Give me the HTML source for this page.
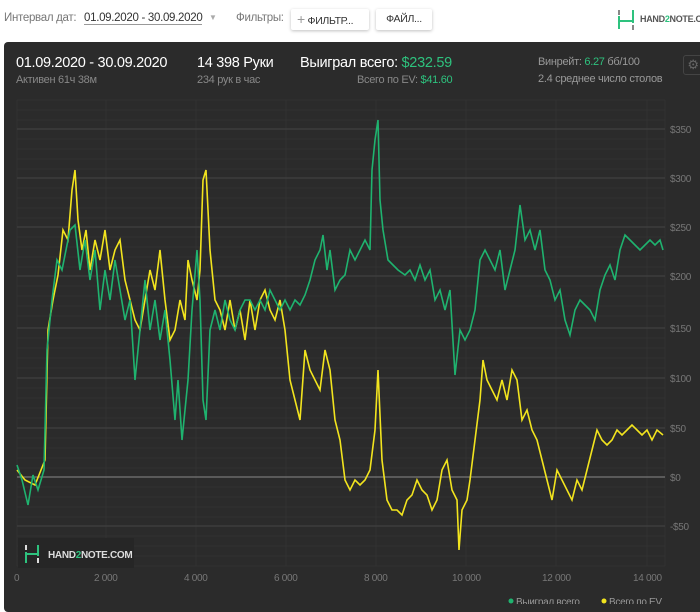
<!DOCTYPE html>
<html><head><meta charset="utf-8"><style>
*{margin:0;padding:0;box-sizing:border-box}
body{width:700px;height:604px;background:#fff;font-family:"Liberation Sans",sans-serif;position:relative;overflow:hidden;letter-spacing:-0.3px}
.t{position:absolute;white-space:nowrap}
.btn{position:absolute;top:9px;height:21px;background:#fff;box-shadow:0 1px 3px rgba(0,0,0,.25);border-radius:2px;font-size:10.5px;color:#333;line-height:21px;padding:0 6px;white-space:nowrap;overflow:hidden}
.panel{position:absolute;left:4px;top:42px;width:700px;height:570px;background:#2b2b2b;border-radius:4px}
</style></head><body>
<div class="t" style="left:4px;top:12px;font-size:11.5px;color:#777">Интервал дат:</div>
<div class="t" style="left:84px;top:12px;font-size:11.5px;color:#333;border-bottom:1px solid #999">01.09.2020 - 30.09.2020</div>
<div class="t" style="left:209px;top:13px;font-size:8px;color:#aaa">▼</div>
<div class="t" style="left:236px;top:12px;font-size:11.5px;color:#777">Фильтры:</div>
<div class="btn" style="left:291px;width:78px"><span style="color:#999;font-size:14px">+</span> ФИЛЬТР...</div>
<div class="btn" style="left:376px;width:56px;text-align:center">ФАЙЛ...</div>
<svg style="position:absolute;left:617px;top:10px" width="18" height="20"><path d="M2 6v13M16 0v13M2 11 L16 11" stroke="#2ec27e" stroke-width="2" fill="none"/><path d="M2 0v5M16 15v5" stroke="#888" stroke-width="2"/></svg>
<div class="t" style="left:640px;top:14px;font-size:9px;font-weight:bold;color:#555">HAND<span style="color:#2ec27e">2</span>NOTE.COM</div>
<div class="panel"></div>
<div class="t" style="left:16px;top:55px;font-size:14.5px;color:#fff">01.09.2020 - 30.09.2020</div>
<div class="t" style="left:16px;top:74px;font-size:11px;color:#888">Активен 61ч 38м</div>
<div class="t" style="left:197px;top:55px;font-size:14.5px;color:#fff">14 398 Руки</div>
<div class="t" style="left:197px;top:74px;font-size:11px;color:#888">234 рук в час</div>
<div class="t" style="left:300px;top:55px;font-size:14.5px;color:#fff">Выиграл всего: <span style="color:#2ec27e">$232.59</span></div>
<div class="t" style="left:357px;top:74px;font-size:11px;color:#888">Всего по EV: <span style="color:#2ec27e">$41.60</span></div>
<div class="t" style="left:538px;top:56px;font-size:11px;color:#999">Винрейт: <span style="color:#2ec27e">6.27</span> бб/100</div>
<div class="t" style="left:538px;top:73px;font-size:11px;color:#999">2.4 среднее число столов</div>
<div style="position:absolute;left:683px;top:55px;width:20px;height:20px;border:1px solid #444;border-radius:3px;color:#666;font-size:13px;line-height:18px;text-align:center">⚙</div>
<svg style="position:absolute;left:0;top:0" width="700" height="604">
<g stroke="#313131" stroke-width="1">
<path d="M17 100H665M17 110H665M17 120H665M17 139H665M17 149H665M17 159H665M17 169H665M17 188H665M17 198H665M17 208H665M17 218H665M17 237H665M17 247H665M17 257H665M17 267H665M17 286H665M17 296H665M17 306H665M17 316H665M17 338H665M17 348H665M17 358H665M17 368H665M17 388H665M17 398H665M17 408H665M17 418H665M17 438H665M17 448H665M17 458H665M17 468H665M17 487H665M17 497H665M17 507H665M17 517H665M17 536H665M17 546H665M17 556H665M17 566H665"/>
<path d="M17 100V566M106 100V566M196 100V566M286 100V566M376 100V566M466 100V566M556 100V566M647 100V566M665 100V566"/>
</g>
<g stroke="#444" stroke-width="1"><path d="M17 129H665M17 178H665M17 227H665M17 276H665M17 328H665M17 378H665M17 428H665M17 526H665"/></g>
<path d="M17 477H665" stroke="#888" stroke-width="1"/>
<polyline fill="none" stroke="#f2e41e" stroke-width="1.6" points="17,470 25,480 35,485 45,460 48,330 53,300 58,275 63,230 68,240 72,190 75,170 78,220 82,250 86,230 90,270 95,240 100,260 105,230 110,270 115,250 120,240 125,280 130,300 135,320 140,330 145,300 150,270 155,290 160,250 165,300 170,340 175,330 180,300 185,320 188,260 192,280 197,300 200,270 203,180 206,170 210,250 215,300 220,310 225,330 230,300 235,330 240,310 245,340 250,300 255,330 260,300 265,290 270,310 275,320 280,300 285,330 290,380 295,400 300,420 305,350 310,370 315,380 320,390 325,350 330,370 335,420 340,440 345,480 350,490 355,480 360,485 365,480 370,470 375,430 378,370 382,460 387,500 392,510 397,510 402,515 407,500 412,495 417,480 422,490 427,495 432,510 437,500 442,470 447,460 452,490 457,500 459,550 462,510 467,500 470,480 475,440 480,400 483,360 487,380 492,390 497,400 502,380 507,400 512,370 517,380 522,420 527,410 532,430 537,440 542,460 547,480 552,500 557,470 562,480 567,490 572,500 577,480 582,490 587,470 592,450 597,430 602,440 607,445 612,440 617,430 622,435 627,430 632,425 637,430 642,435 647,430 652,440 657,430 663,435"/>
<polyline fill="none" stroke="#1fb36f" stroke-width="1.6" points="17,465 22,480 28,505 33,475 38,490 44,470 47,350 52,300 57,260 62,270 66,250 70,230 75,225 80,270 85,240 90,280 95,250 100,310 105,270 110,300 115,260 120,290 125,320 130,300 135,380 140,330 145,280 150,330 155,300 160,340 165,310 170,360 175,420 178,380 182,440 185,410 188,380 192,310 197,250 200,300 203,400 206,420 210,330 215,310 220,330 225,300 230,320 235,330 240,310 245,300 250,300 255,310 260,300 265,310 270,290 275,300 280,310 285,300 290,310 295,300 300,305 305,295 310,280 315,260 320,250 323,235 327,270 330,250 335,290 340,280 345,275 350,250 355,260 360,250 365,240 370,250 372,170 375,140 378,120 380,200 383,230 388,260 393,265 398,270 405,275 410,270 415,280 420,265 425,280 430,270 435,300 440,290 445,310 450,290 455,375 460,330 465,340 470,330 475,310 480,260 485,250 490,260 495,270 500,250 505,290 510,270 515,250 520,205 525,240 530,230 535,250 540,230 545,270 550,280 555,300 560,290 565,320 570,335 575,310 580,300 585,305 590,310 595,320 600,290 605,275 610,265 615,280 620,250 625,235 630,240 635,245 640,250 645,245 650,240 655,245 660,240 663,250"/>
<g font-family="Liberation Sans" font-size="10" fill="#777">
<text x="670" y="133">$350</text><text x="670" y="182">$300</text><text x="670" y="231">$250</text><text x="670" y="280">$200</text><text x="670" y="332">$150</text><text x="670" y="382">$100</text><text x="670" y="432">$50</text><text x="670" y="481">$0</text><text x="670" y="530">-$50</text>
<text x="14" y="581">0</text><text x="94" y="581">2 000</text><text x="184" y="581">4 000</text><text x="274" y="581">6 000</text><text x="364" y="581">8 000</text><text x="452" y="581">10 000</text><text x="542" y="581">12 000</text><text x="633" y="581">14 000</text>
</g>
<rect x="18" y="538" width="116" height="30" fill="#262626"/>
<path d="M26 552v11M38 545v11M26 554L38 554" stroke="#2ec27e" stroke-width="2" fill="none"/>
<path d="M26 545v5M38 558v5" stroke="#ddd" stroke-width="2"/>
<text x="48" y="558" font-family="Liberation Sans" font-size="10" font-weight="bold" fill="#ddd" letter-spacing="-0.3">HAND<tspan fill="#2ec27e">2</tspan>NOTE.COM</text>
<circle cx="511" cy="601" r="2.5" fill="#1fb36f"/><text x="516" y="605" font-family="Liberation Sans" font-size="10" fill="#999">Выиграл всего</text>
<circle cx="604" cy="601" r="2.5" fill="#f2e41e"/><text x="609" y="605" font-family="Liberation Sans" font-size="10" fill="#999">Всего по EV</text>
</svg>
</body></html>
